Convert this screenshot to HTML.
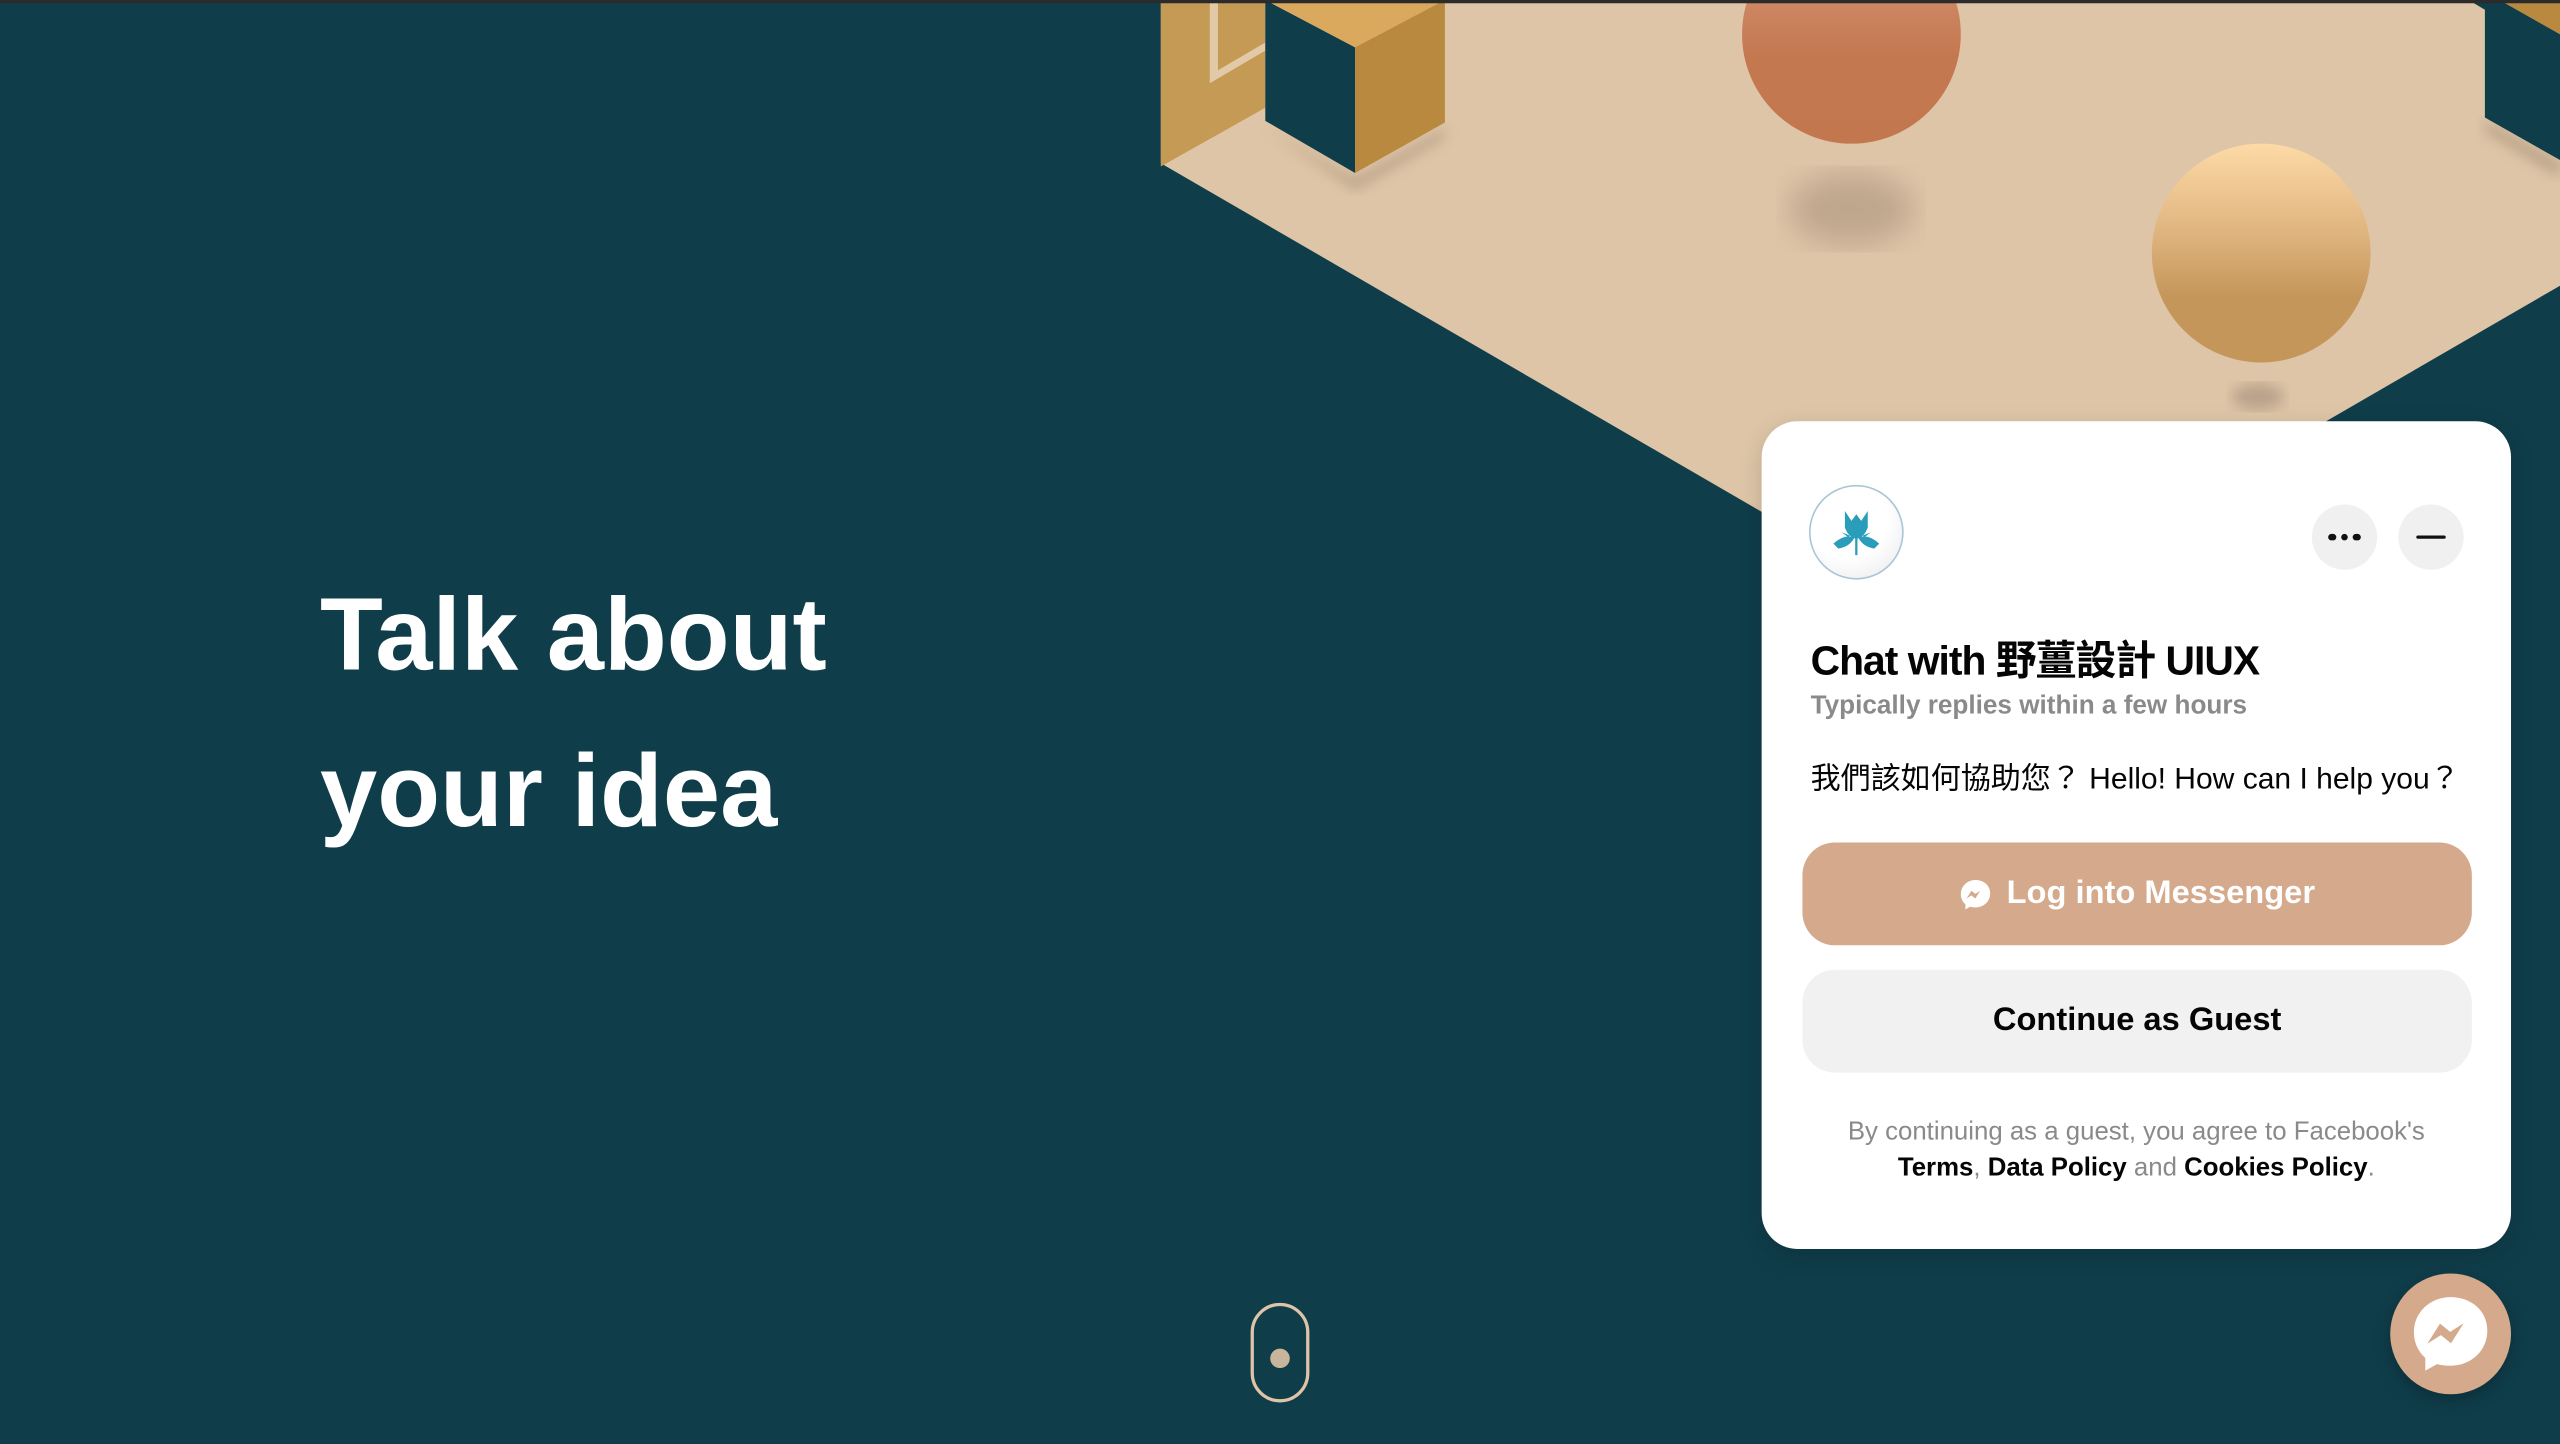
<!DOCTYPE html>
<html><head><meta charset="utf-8"><style>
html,body{margin:0;padding:0;width:2560px;height:1444px;overflow:hidden;background:#0f3d4a}
#s{position:absolute;left:0;top:0;width:1568px;height:884.5px;transform:scale(1.632653);transform-origin:0 0;font-family:"Liberation Sans","Noto Sans CJK TC",sans-serif;}
.h{position:absolute;left:196px;color:#fff;font-weight:700;font-size:63px;letter-spacing:0;line-height:1}
.card{position:absolute;left:1079px;top:258px;width:459px;height:507px;background:#fff;border-radius:22px;box-shadow:0 4px 14px rgba(0,0,0,.15)}
.t{position:absolute;white-space:nowrap}
.btn{position:absolute;left:25px;width:410px;height:63px;border-radius:20px;display:flex;align-items:center;justify-content:center;font-size:20px;font-weight:700}
</style></head><body><div id="s">
<div style="position:absolute;left:0;top:0;width:1568px;height:2px;background:#2b2b2b;z-index:5"></div>
<svg width="1568" height="884" style="position:absolute;left:0;top:0">
<defs>
<linearGradient id="o" x1="0" y1="0" x2="0" y2="1"><stop offset="0" stop-color="#d99c7c"/><stop offset=".6" stop-color="#c47850"/><stop offset="1" stop-color="#c2774e"/></linearGradient>
<linearGradient id="g" x1="0" y1="0" x2="0" y2="1"><stop offset="0" stop-color="#fddaa6"/><stop offset=".45" stop-color="#dcb07a"/><stop offset=".7" stop-color="#c4965a"/><stop offset="1" stop-color="#c4965a"/></linearGradient>
<filter id="b"><feGaussianBlur stdDeviation="9"/></filter>
<filter id="b2"><feGaussianBlur stdDeviation="4"/></filter>
</defs>
<polygon points="711,0 1568,0 1568,175 1204,386 711,100" fill="#dec5a7"/>
<ellipse cx="1134" cy="128" rx="38" ry="22" fill="#b79f88" filter="url(#b)" opacity=".8"/>
<ellipse cx="1383" cy="243" rx="16" ry="8" fill="#b09a84" filter="url(#b2)" opacity=".8"/>
<polygon points="775,78 830,110 885,79 885,84 830,116" fill="#8a7560" filter="url(#b2)" opacity=".5"/>
<polygon points="1522,74 1568,100 1568,108 1522,80" fill="#8a7560" filter="url(#b2)" opacity=".5"/>
<polygon points="711,0 775,0 775,66 711,102" fill="#c49a55"/>
<polygon points="741,0 746,0 746,43 775,26 775,31 741,51" fill="#e2c9a7"/>
<polygon points="775,0 830,29 830,106 775,74" fill="#0f3d4a"/>
<polygon points="775,0 885,0 830,29" fill="#dba95d"/>
<polygon points="830,29 885,0 885,75 830,106" fill="#b8893e"/>
<circle cx="1134" cy="21" r="67" fill="url(#o)"/>
<circle cx="1385" cy="155" r="67" fill="url(#g)"/>
<polygon points="1512,0 1531,0 1568,21 1568,98 1522,72 1522,6" fill="#0f3d4a"/>
<polygon points="1531,0 1568,0 1568,21" fill="#b8893e"/>
<rect x="767" y="799" width="34" height="59" rx="17" fill="none" stroke="#dec5a7" stroke-width="2"/>
<circle cx="784" cy="832" r="6" fill="#c9b59c"/>
</svg>
<div class="h" style="top:358px">Talk about</div>
<div class="h" style="top:454px">your idea</div>
<div class="card">
 <div style="position:absolute;left:29px;top:39px;width:58px;height:58px;border-radius:50%;border:1px solid #a9c6d6;box-sizing:border-box;background:radial-gradient(circle at 40% 35%,#fff 50%,#e6e6e6)">
  <svg width="56" height="56" viewBox="0 0 56 56"><g fill="#2a9dbb"><path d="M21 15 L25 21 L28 17 L31 21 L35 15 L35 25 Q33 31 28 32 Q23 31 21 25Z"/><path d="M14 35 Q20 29 27 31 Q24 37 17 38Z"/><path d="M42 35 Q36 29 29 31 Q32 37 39 38Z"/><rect x="27.3" y="30" width="1.4" height="12"/><path d="M19 28 L24 30 L23 31Z"/><path d="M37 28 L32 30 L33 31Z"/></g></svg>
 </div>
 <div style="position:absolute;left:337px;top:51px;width:40px;height:40px;border-radius:50%;background:#f0f0f0;display:flex;align-items:center;justify-content:center;gap:3px"><i style="width:4.5px;height:4.5px;border-radius:50%;background:#111"></i><i style="width:4.5px;height:4.5px;border-radius:50%;background:#111"></i><i style="width:4.5px;height:4.5px;border-radius:50%;background:#111"></i></div>
 <div style="position:absolute;left:390px;top:51px;width:40px;height:40px;border-radius:50%;background:#f0f0f0;display:flex;align-items:center;justify-content:center"><i style="width:18px;height:2.5px;border-radius:2px;background:#111"></i></div>
 <div class="t" style="left:30px;top:127px;font-size:25px;font-weight:600;color:#050505;letter-spacing:-0.6px">Chat with 野薑設計 UIUX</div>
 <div class="t" style="left:30px;top:166px;font-size:16px;font-weight:600;color:#8a8a8a">Typically replies within a few hours</div>
 <div class="t" style="left:30px;top:205px;font-size:18.4px;color:#050505">我們該如何協助您？ Hello! How can I help you？</div>
 <div class="btn" style="top:258px;background:#d4a98c;color:#fff"><svg width="20" height="20" viewBox="0 0 20 20" style="margin-right:9px"><path d="M10 1C5 1 1 4.7 1 9.6c0 2.6 1.1 4.8 2.8 6.3V19l2.9-1.6c1 .3 2.1.4 3.3.4 5 0 9-3.7 9-8.6S15 1 10 1z" fill="#fff"/><path d="M4.5 12.3l3-4.7 2.4 1.9 3-1.9-3 4.7-2.4-1.9z" fill="#d4a98c"/></svg>Log into Messenger</div>
 <div class="btn" style="top:336px;background:#f1f1f1;color:#050505;font-weight:600">Continue as Guest</div>
 <div class="t" style="left:0;width:459px;text-align:center;top:425px;font-size:15.8px;color:#8a8a8a;line-height:22px">By continuing as a guest, you agree to Facebook's<br><b style="color:#050505;font-weight:600">Terms</b>, <b style="color:#050505;font-weight:600">Data Policy</b> and <b style="color:#050505;font-weight:600">Cookies Policy</b>.</div>
</div>
<div style="position:absolute;left:1464px;top:780px;width:74px;height:74px;border-radius:50%;background:#d4a98c;box-shadow:0 3px 10px rgba(0,0,0,.25);display:flex;align-items:center;justify-content:center">
 <svg width="50" height="50" viewBox="0 0 20 20"><path d="M10 1C5 1 1 4.7 1 9.6c0 2.6 1.1 4.8 2.8 6.3V19l2.9-1.6c1 .3 2.1.4 3.3.4 5 0 9-3.7 9-8.6S15 1 10 1z" fill="#fff"/><path d="M4.3 12.4l3.1-4.9 2.5 2 3.3-2.1-3.1 4.9-2.5-2z" fill="#d4a98c"/></svg>
</div>
</div></body></html>
